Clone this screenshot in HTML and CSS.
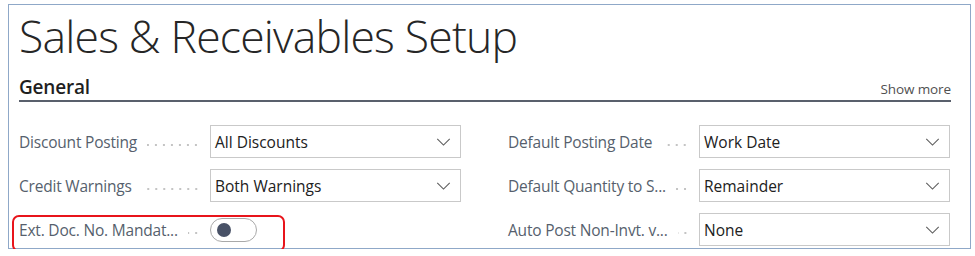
FILE: index.html
```html
<!DOCTYPE html>
<html>
<head>
<meta charset="utf-8">
<link rel="stylesheet" href="styles.css">
</head>
<body>
<div class="frame">
  <h1 class="title">Sales &amp; Receivables Setup</h1>
  <div class="section-head">
    <span class="section-name">General</span>
    <span class="show-more">Show more</span>
  </div>
  <div class="fields">
    <div class="col">
      <div class="row">
        <span class="label">Discount Posting</span><span class="dots"></span>
        <div class="select"><span class="value">All Discounts</span><svg class="chev" viewBox="0 0 16 9"><path d="M1 1 L8 8 L15 1"/></svg></div>
      </div>
      <div class="row">
        <span class="label">Credit Warnings</span><span class="dots"></span>
        <div class="select"><span class="value">Both Warnings</span><svg class="chev" viewBox="0 0 16 9"><path d="M1 1 L8 8 L15 1"/></svg></div>
      </div>
      <div class="row highlight-row">
        <span class="label">Ext. Doc. No. Mandat...</span><span class="dots"></span>
        <div class="toggle-cell"><span class="toggle"><span class="knob"></span></span></div>
        <span class="highlight"></span>
      </div>
    </div>
    <div class="col">
      <div class="row">
        <span class="label">Default Posting Date</span><span class="dots"></span>
        <div class="select"><span class="value">Work Date</span><svg class="chev" viewBox="0 0 16 9"><path d="M1 1 L8 8 L15 1"/></svg></div>
      </div>
      <div class="row">
        <span class="label">Default Quantity to S...</span><span class="dots"></span>
        <div class="select"><span class="value">Remainder</span><svg class="chev" viewBox="0 0 16 9"><path d="M1 1 L8 8 L15 1"/></svg></div>
      </div>
      <div class="row">
        <span class="label">Auto Post Non-Invt. v...</span><span class="dots"></span>
        <div class="select"><span class="value">None</span><svg class="chev" viewBox="0 0 16 9"><path d="M1 1 L8 8 L15 1"/></svg></div>
      </div>
    </div>
  </div>
</div>
</body>
</html>
```
FILE: styles.css
```css
html, body {
  margin: 0;
  padding: 0;
  background: #ffffff;
}
body {
  font-family: "Open Sans", "Noto Sans", sans-serif;
}
.frame {
  margin: 4px 4px 0 8px;
  width: 963px;
  height: 245px;
  box-sizing: border-box;
  border: 1px solid #8fa8c8;
  padding: 0 19px 0 10px;
  position: relative;
}
.title {
  margin: 0;
  font-weight: 300;
  font-size: 44.5px;
  line-height: 62px;
  color: #262626;
  letter-spacing: -0.8px;
  height: 62px;
}
.section-head {
  display: flex;
  justify-content: space-between;
  align-items: baseline;
  border-bottom: 2px solid #59606c;
  height: 35px;
  box-sizing: border-box;
  padding-top: 7px;
}
.section-name {
  font-size: 19px;
  font-weight: 600;
  color: #1f1f1f;
  letter-spacing: -0.2px;
}
.show-more {
  font-size: 13.5px;
  color: #505050;
  letter-spacing: -0.1px;
}
.fields {
  display: grid;
  grid-template-columns: 442px 442px;
  column-gap: 47px;
  padding-top: 23px;
}
.col {
  display: flex;
  flex-direction: column;
  gap: 11px;
}
.row {
  display: flex;
  align-items: center;
  height: 33px;
  position: relative;
}
.label {
  font-size: 15.5px;
  color: #565f6d;
  white-space: nowrap;
  letter-spacing: -0.2px;
}
.dots {
  flex: 1;
  height: 4px;
  margin: 6px 10px 0 10px;
  background-image: radial-gradient(circle, #c4c4c4 0.9px, transparent 1.2px);
  background-size: 8px 4px;
  background-repeat: repeat-x;
  background-position: right center;
}
.select {
  width: 251px;
  height: 33px;
  box-sizing: border-box;
  border: 1px solid #c9c9c9;
  display: flex;
  align-items: center;
  justify-content: space-between;
  padding: 0 9px 0 4px;
  flex: none;
}
.value {
  font-size: 15.5px;
  color: #212121;
  letter-spacing: 0;
}
.chev {
  width: 15px;
  height: 8px;
  fill: none;
  stroke: #5c5c5c;
  stroke-width: 1.2;
}
.toggle-cell {
  width: 251px;
  flex: none;
  display: flex;
  align-items: center;
}
.toggle {
  width: 47px;
  height: 24px;
  box-sizing: border-box;
  border: 1px solid #a9a9a9;
  border-radius: 12px;
  display: flex;
  align-items: center;
  padding-left: 6px;
}
.knob {
  width: 14px;
  height: 14px;
  border-radius: 50%;
  background: #495267;
}
.highlight {
  position: absolute;
  left: -7px;
  top: 2px;
  width: 273px;
  height: 37px;
  box-sizing: border-box;
  border: 2px solid #e8141b;
  border-radius: 7px;
}
```
